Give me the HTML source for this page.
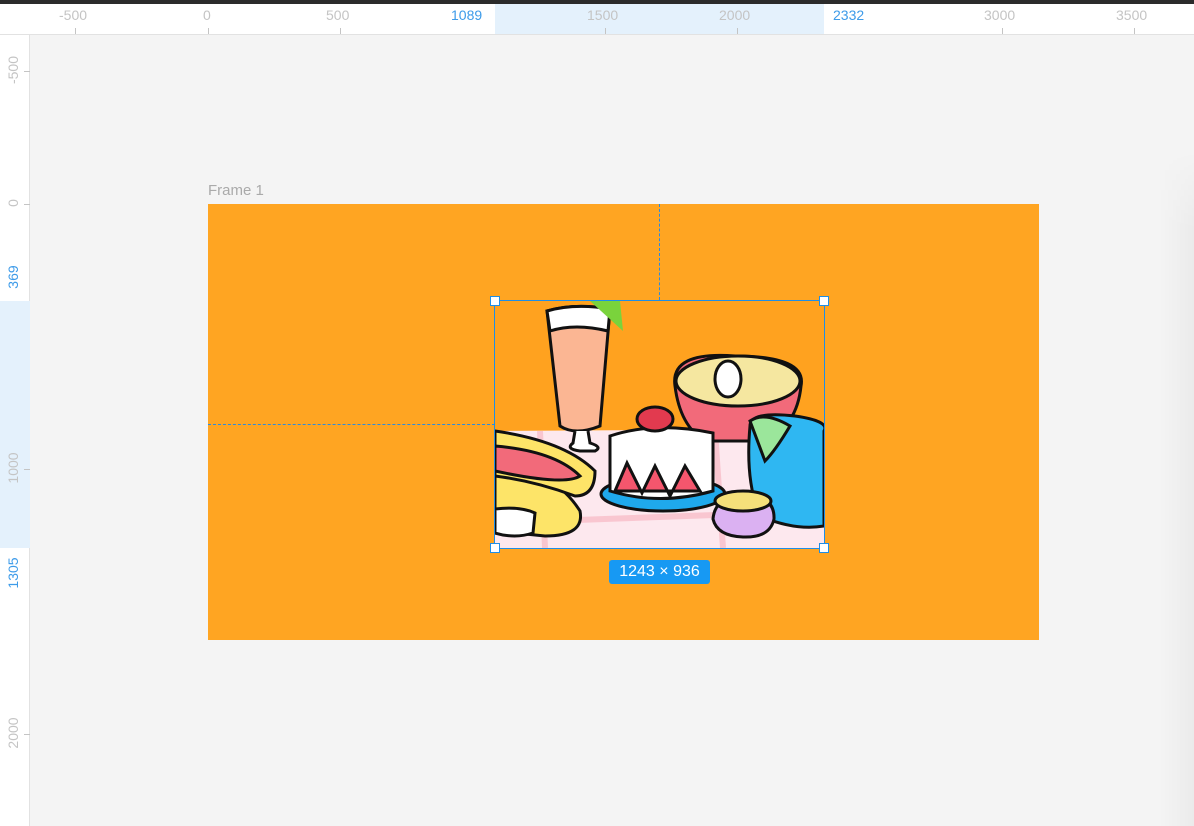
<!DOCTYPE html>
<html><head><meta charset="utf-8"><style>
*{margin:0;padding:0;box-sizing:border-box}
body{width:1194px;height:826px;overflow:hidden;background:#f4f4f4;font-family:"Liberation Sans",sans-serif;position:relative}
.top{position:absolute;left:0;top:0;width:1194px;height:4px;background:#2b2b2b}
.rt{position:absolute;left:0;top:4px;width:1194px;height:31px;background:#fff;border-bottom:1px solid #e2e2e2}
.rl{position:absolute;left:0;top:35px;width:30px;height:791px;background:#fff;border-right:1px solid #e2e2e2}
.lab{position:absolute;font-size:14px;color:#c4c4c4}
.tk{position:absolute;background:#c4c4c4}
.lv{position:absolute;font-size:14px;color:#c4c4c4;transform:rotate(-90deg);transform-origin:center;white-space:nowrap}
</style></head><body>
<div class="top"></div>
<div class="rt">
<div style="position:absolute;left:495px;top:0;width:329px;height:30px;background:#e4f1fc"></div>
<div class="lab" style="left:59px;top:3px">-500</div><div class="tk" style="left:75px;top:24px;width:1px;height:6px"></div>
<div class="lab" style="left:203px;top:3px">0</div><div class="tk" style="left:208px;top:24px;width:1px;height:6px"></div>
<div class="lab" style="left:326px;top:3px">500</div><div class="tk" style="left:340px;top:24px;width:1px;height:6px"></div>
<div class="lab" style="left:451px;top:3px;color:#3d9be9">1089</div>
<div class="lab" style="left:587px;top:3px">1500</div><div class="tk" style="left:605px;top:24px;width:1px;height:6px"></div>
<div class="lab" style="left:719px;top:3px">2000</div><div class="tk" style="left:737px;top:24px;width:1px;height:6px"></div>
<div class="lab" style="left:833px;top:3px;color:#3d9be9">2332</div>
<div class="lab" style="left:984px;top:3px">3000</div><div class="tk" style="left:1002px;top:24px;width:1px;height:6px"></div>
<div class="lab" style="left:1116px;top:3px">3500</div><div class="tk" style="left:1134px;top:24px;width:1px;height:6px"></div>
</div>
<div class="rl">
<div style="position:absolute;left:0;top:266px;width:30px;height:247px;background:#e4f1fc"></div>
<div class="lv" style="left:-7px;top:27px;width:40px;text-align:center">-500</div><div class="tk" style="left:24px;top:36px;width:6px;height:1px"></div>
<div class="lv" style="left:-7px;top:160px;width:40px;text-align:center">0</div><div class="tk" style="left:24px;top:169px;width:6px;height:1px"></div>
<div class="lv" style="left:-7px;top:234px;width:40px;text-align:center;color:#3d9be9">369</div>
<div class="lv" style="left:-7px;top:425px;width:40px;text-align:center">1000</div><div class="tk" style="left:24px;top:434px;width:6px;height:1px"></div>
<div class="lv" style="left:-7px;top:530px;width:40px;text-align:center;color:#3d9be9">1305</div>
<div class="lv" style="left:-7px;top:690px;width:40px;text-align:center">2000</div><div class="tk" style="left:24px;top:699px;width:6px;height:1px"></div>
</div>
<div style="position:absolute;right:0;top:150px;width:35px;height:676px;background:linear-gradient(90deg,rgba(0,0,0,0),rgba(0,0,0,0.035));-webkit-mask-image:linear-gradient(180deg,transparent,#000 80px);mask-image:linear-gradient(180deg,transparent,#000 80px)"></div>
<div class="lab" style="left:208px;top:182px;font-size:15px;color:#aaa">Frame 1</div>
<div style="position:absolute;left:208px;top:204px;width:831px;height:436px;background:#ffa522"></div>
<div style="position:absolute;left:659px;top:204px;width:0;height:96px;border-left:1px dashed #2a8be0"></div>
<div style="position:absolute;left:208px;top:424px;width:287px;height:0;border-top:1px dashed #2a8be0"></div>
<svg style="position:absolute;left:495px;top:301px" width="329" height="247" viewBox="0 0 329 247">
<rect width="329" height="247" fill="#ffa21f"/>
<path d="M0 130 L329 128 L329 247 L0 247Z" fill="#fde8ee"/>
<path d="M45 130 L50 247 M0 222 L329 210 M220 130 L228 247" stroke="#f9c6d0" stroke-width="6"/>
<g stroke="#111" stroke-width="3">
<path d="M52 10 Q80 2 115 8 L105 125 Q80 135 65 125Z" fill="#fbb693"/>
<path d="M52 10 Q80 2 115 8 L113 30 Q80 22 55 30Z" fill="#fff"/>
<path d="M80 130 L78 142 Q70 148 85 150 L100 150 Q108 146 95 142 L93 130" fill="#fff"/>
<path d="M180 85 Q175 50 240 55 Q312 55 306 85 Q302 125 270 140 L210 140 Q185 125 180 85Z" fill="#f26a7a"/>
<ellipse cx="243" cy="80" rx="62" ry="25" fill="#f5e7a0"/>
<ellipse cx="233" cy="78" rx="13" ry="18" fill="#fff"/>
<path d="M255 125 Q255 110 300 115 Q335 120 329 130 L329 225 Q300 230 265 215 Q250 180 255 125Z" fill="#2fb7f2"/>
<path d="M255 120 Q270 110 295 125 Q280 150 270 160Z" fill="#9be69b"/>
<ellipse cx="168" cy="193" rx="62" ry="17" fill="#1fa9ec"/>
<path d="M115 135 Q160 120 218 132 L218 190 Q165 205 115 190Z" fill="#fff"/>
<path d="M120 190 L132 162 L147 192 L160 165 L175 195 L190 165 L205 190Z" fill="#f5566d"/>
<ellipse cx="160" cy="118" rx="18" ry="12" fill="#e23a4f"/>
<path d="M0 160 Q60 170 85 210 Q90 235 50 235 L0 230Z" fill="#fde468"/>
<path d="M0 130 Q70 140 100 170 Q100 195 80 195 Q40 180 0 175Z" fill="#fde468"/>
<path d="M0 145 Q60 150 85 175 Q70 185 0 170Z" fill="#f26a7a"/>
<path d="M0 208 Q25 205 40 212 L38 232 Q20 238 0 232Z" fill="#fff"/>
<path d="M218 218 Q220 195 250 193 Q280 195 279 218 Q275 237 248 236 Q222 235 218 218Z" fill="#dbb1f2"/>
<ellipse cx="248" cy="200" rx="28" ry="10" fill="#f5e07a"/>
</g>
<path d="M95 0 L125 0 L128 30Z" fill="#7ad33c"/>
</svg>
<div style="position:absolute;left:494px;top:300px;width:331px;height:249px;border:1.5px solid #1f8ee6"></div>
<div style="position:absolute;left:490px;top:296px;width:10px;height:10px;background:#fff;border:1.5px solid #1f8ee6"></div>
<div style="position:absolute;left:819px;top:296px;width:10px;height:10px;background:#fff;border:1.5px solid #1f8ee6"></div>
<div style="position:absolute;left:490px;top:543px;width:10px;height:10px;background:#fff;border:1.5px solid #1f8ee6"></div>
<div style="position:absolute;left:819px;top:543px;width:10px;height:10px;background:#fff;border:1.5px solid #1f8ee6"></div>
<div style="position:absolute;left:609px;top:560px;width:101px;height:24px;background:#1799f3;border-radius:3px;color:#fff;font-size:16px;line-height:24px;text-align:center">1243 × 936</div>
</body></html>
